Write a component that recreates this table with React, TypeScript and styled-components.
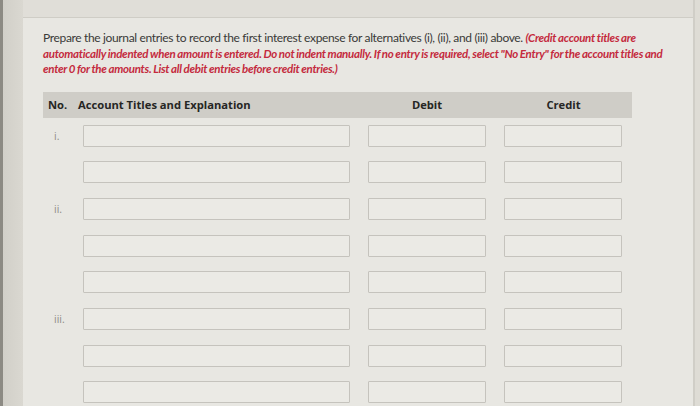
import styled, { createGlobalStyle } from 'styled-components'

const GlobalStyle = createGlobalStyle`
  html, body {
    margin: 0;
    padding: 0;
    background: #d7d5ce;
    overflow: hidden;
  }
`

const Screen = styled.div`
  display: flex;
  width: 700px;
  height: 406px;
  background: #d7d5ce;
`

const LeftEdge = styled.div`
  width: 20px;
  flex-shrink: 0;
  border-left: 3px solid #8c8a83;
  background: linear-gradient(90deg, #d1cfc8, #dad8d1);
`

const RightEdge = styled.div`
  width: 14px;
  flex-shrink: 0;
  background: #dedcd5;
  border-left: 2px solid #d0cec7;
`

const Main = styled.div`
  flex: 1;
  display: flex;
  flex-direction: column;
  background: #e8e7e2;
`

const TopBand = styled.div`
  height: 17px;
  flex-shrink: 0;
  background: #e0ded8;
  border-bottom: 1px solid #cfcdc6;
`

const Content = styled.div`
  padding: 12px 0 0 20px;
`

const Instructions = styled.p`
  margin: 0;
  width: 650px;
  white-space: nowrap;
  font-family: Lato, 'Liberation Sans', sans-serif;
  font-size: 12px;
  line-height: 15.5px;
  letter-spacing: -0.35px;
  color: #3a3a38;
`

const Note = styled.em`
  color: #c42a3d;
  font-weight: 700;
  font-size: 11.5px;
  letter-spacing: -0.28px;
  word-spacing: -0.4px;
`

const Table = styled.div`
  margin-top: 15px;
  width: 589px;
`

const HeaderRow = styled.div`
  display: grid;
  grid-template-columns: 30px 1fr 136px 137px;
  align-items: center;
  height: 26px;
  background: #cfcdc7;
  font-family: 'Open Sans', Lato, sans-serif;
  font-size: 11.2px;
  font-weight: 700;
  color: #262624;
`

const HeadCell = styled.div<{ $center?: boolean }>`
  padding-left: ${(p) => (p.$center ? '0' : '5px')};
  text-align: ${(p) => (p.$center ? 'center' : 'left')};
`

const Rows = styled.div`
  display: flex;
  flex-direction: column;
  gap: 14.7px;
  padding-top: 7px;
`

const EntryRow = styled.div`
  display: grid;
  grid-template-columns: 22px 267px 118px 118px;
  column-gap: 18px;
  align-items: center;
  height: 22px;
`

const RowLabel = styled.span`
  padding-left: 11px;
  font-family: 'Open Sans', sans-serif;
  font-size: 10.5px;
  color: #8f8d87;
  white-space: nowrap;
`

const Field = styled.div`
  height: 22px;
  box-sizing: border-box;
  border: 1.5px solid #c5c3bd;
  border-radius: 1px;
  background: #ebeae5;
`

const rows = ['i.', '', 'ii.', '', '', 'iii.', '', '']

export default function App() {
  return (
    <>
      <GlobalStyle />
      <Screen>
        <LeftEdge />
        <Main>
          <TopBand />
          <Content>
            <Instructions>
              Prepare the journal entries to record the first interest expense for alternatives (i),
              (ii), and (iii) above.{' '}
              <Note>
                (Credit account titles are
                <br />
                automatically indented when amount is entered. Do not indent manually. If no entry
                is required, select "No Entry" for the account titles and
                <br />
                enter 0 for the amounts. List all debit entries before credit entries.)
              </Note>
            </Instructions>
            <Table>
              <HeaderRow>
                <HeadCell>No.</HeadCell>
                <HeadCell>Account Titles and Explanation</HeadCell>
                <HeadCell $center>Debit</HeadCell>
                <HeadCell $center>Credit</HeadCell>
              </HeaderRow>
              <Rows>
                {rows.map((label, i) => (
                  <EntryRow key={i}>
                    <RowLabel>{label}</RowLabel>
                    <Field />
                    <Field />
                    <Field />
                  </EntryRow>
                ))}
              </Rows>
            </Table>
          </Content>
        </Main>
        <RightEdge />
      </Screen>
    </>
  )
}
